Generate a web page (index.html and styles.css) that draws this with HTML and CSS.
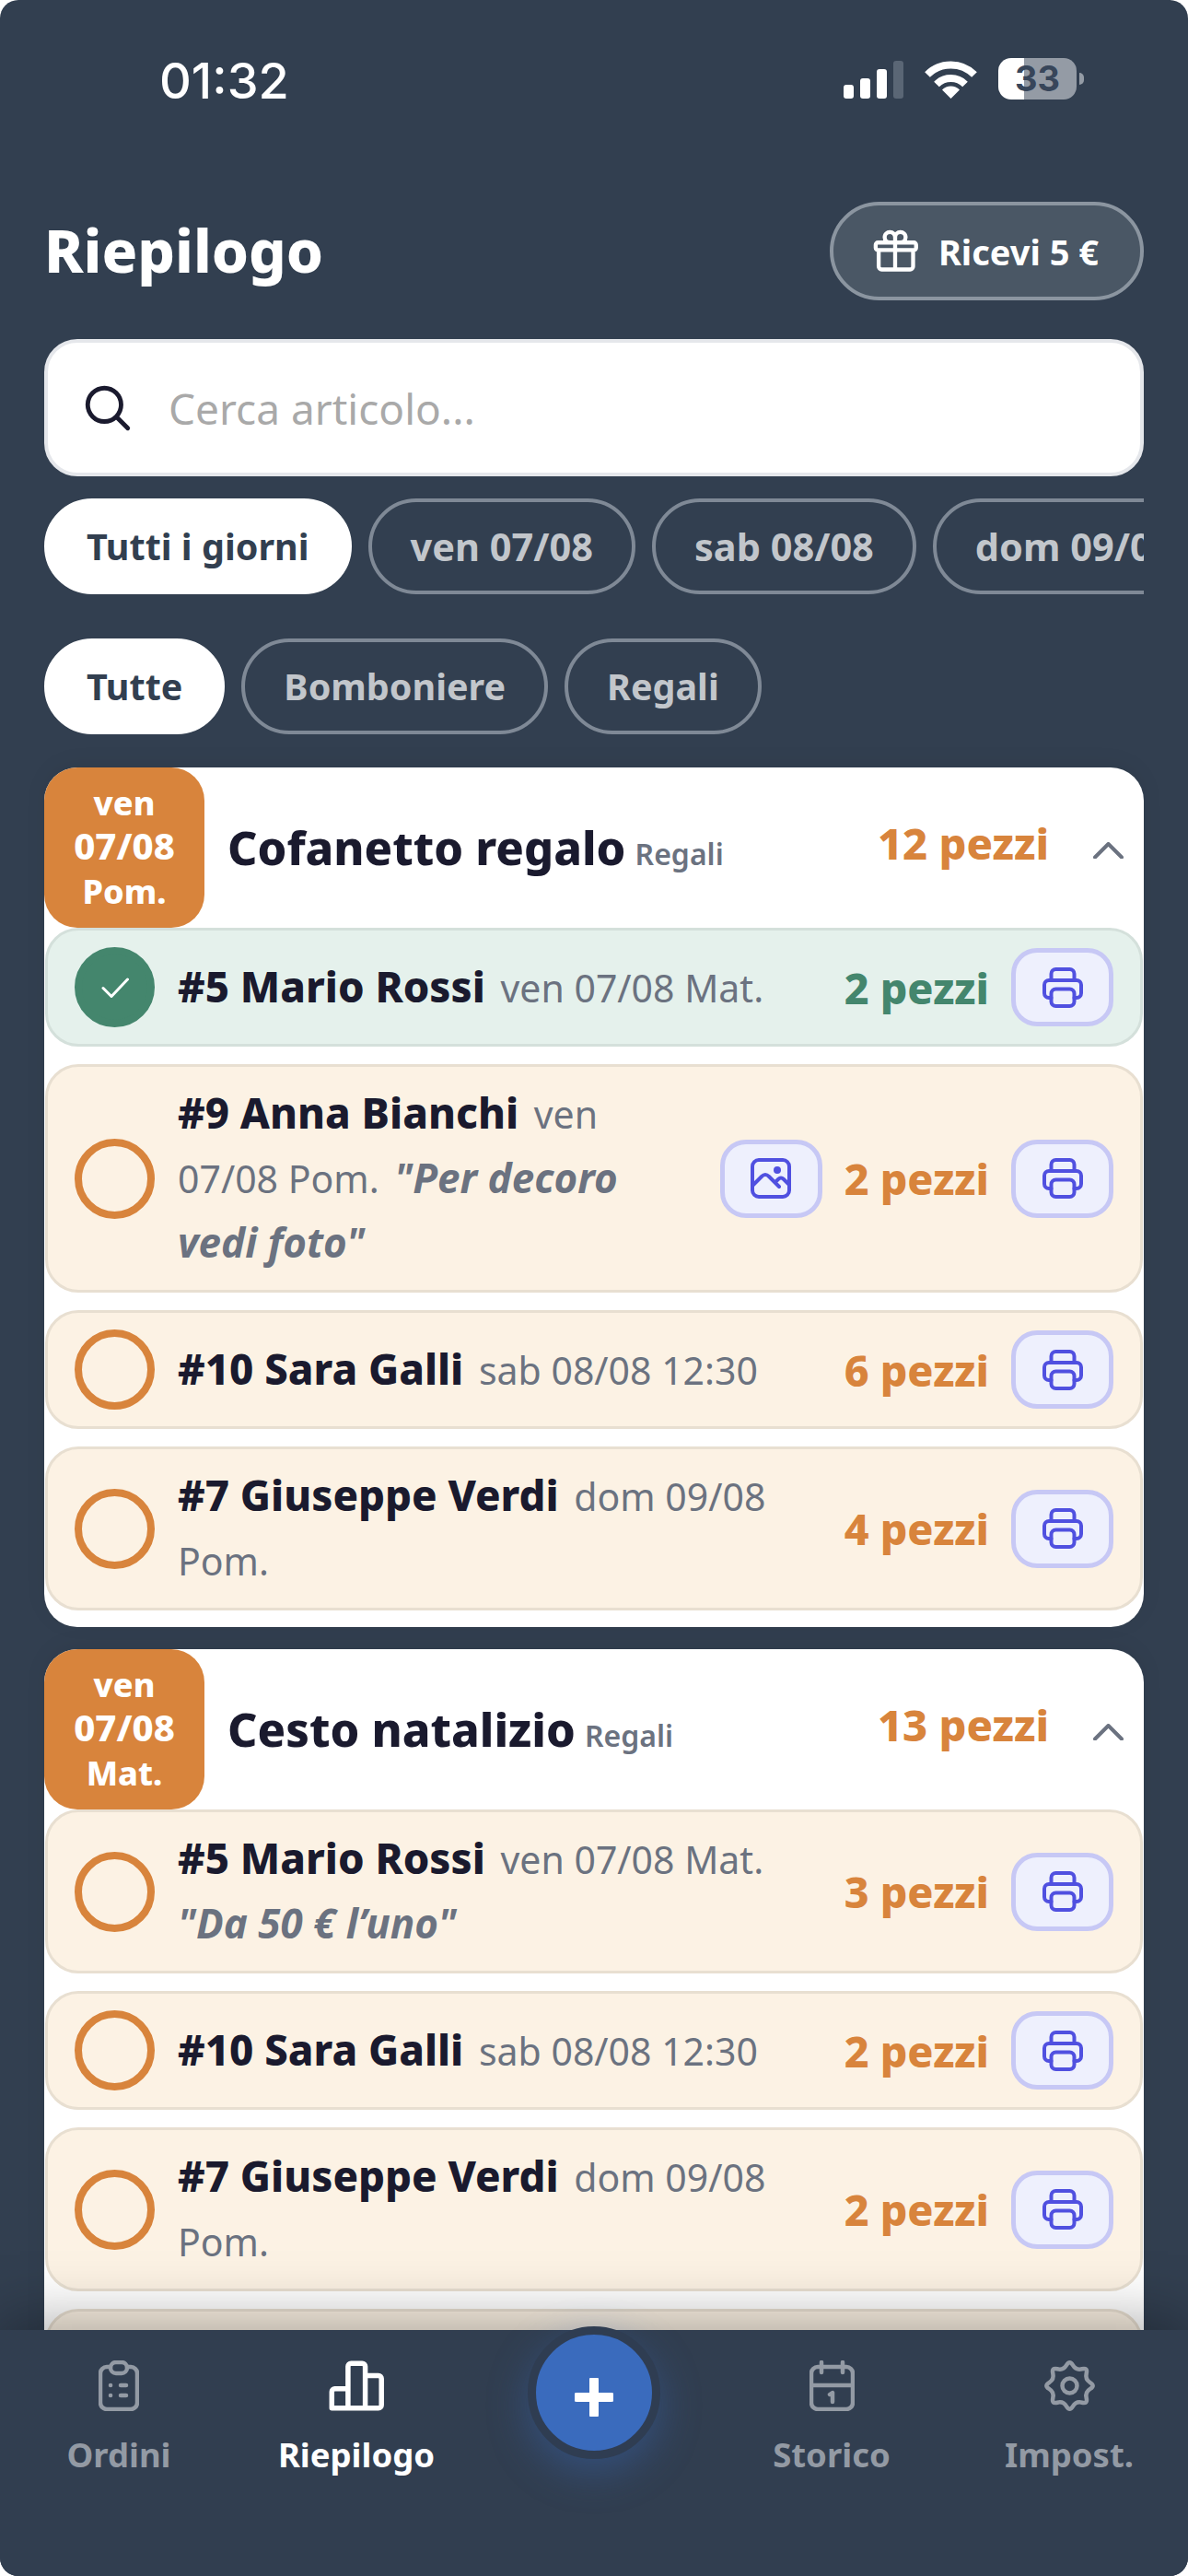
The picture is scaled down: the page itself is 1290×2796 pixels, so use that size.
FILE: index.html
```html
<!DOCTYPE html>
<html lang="it">
<head>
<meta charset="utf-8">
<title>Riepilogo</title>
<link rel="stylesheet" href="styles.css">
</head>
<body>
<svg class="defs" width="0" height="0" aria-hidden="true">
  <symbol id="printer" viewBox="0 0 44 44"><path d="M9.5 14V7a5 5 0 0 1 5-5h15a5 5 0 0 1 5 5v7M9.5 33H7a5 5 0 0 1-5-5v-9a5 5 0 0 1 5-5h30a5 5 0 0 1 5 5v9a5 5 0 0 1-5 5h-2.5"/><rect x="9.5" y="23.5" width="25" height="18.5" rx="5"/></symbol>
  <symbol id="photo" viewBox="0 0 44 44"><rect x="2" y="2" width="40" height="40" rx="7"/><path d="M2 30l10-10q4-4 8 0l11 11M27 26l3-3q3-3 6 0l6 6"/><circle class="dot" cx="29" cy="13" r="2"/></symbol>
</svg>
<div class="app">
  <div class="status">
    <span class="time">01:32</span>
    <div class="status-icons">
      <div class="signal"><i class="b1"></i><i class="b2"></i><i class="b3"></i><i class="b4"></i></div>
      <svg class="wifi" viewBox="0 0 57 42"><path d="M3 16A36 36 0 0 1 54 16M13 26.500A22 22 0 0 1 44 26.500" fill="none" stroke="#fff" stroke-width="8"/><path d="M28.500 42L19 32.500A13.400 13.400 0 0 1 38 32.500Z" fill="#fff"/></svg>
      <div class="battery"><span>33</span></div>
      <i class="nub"></i>
    </div>
  </div>

  <header class="top">
    <h1>Riepilogo</h1>
    <button class="reward">
      <svg viewBox="0 0 24 24"><path d="M21 11.250v8.250a1.500 1.500 0 0 1-1.500 1.500H5.250a1.500 1.500 0 0 1-1.500-1.500v-8.250M12 4.875A2.625 2.625 0 1 0 9.375 7.500H12m0-2.625V7.500m0-2.625A2.625 2.625 0 1 1 14.625 7.500H12m0 0V21m-8.625-9.750h18c.621 0 1.125-.504 1.125-1.125v-1.500c0-.621-.504-1.125-1.125-1.125h-18c-.621 0-1.125.504-1.125 1.125v1.500c0 .621.504 1.125 1.125 1.125Z"/></svg>
      Ricevi 5 €
    </button>
  </header>

  <div class="search">
    <svg viewBox="0 0 24 24"><path d="m21 21-5.197-5.197m0 0A7.500 7.500 0 1 0 5.196 5.196a7.500 7.500 0 0 0 10.607 10.607Z"/></svg>
    <span>Cerca articolo...</span>
  </div>

  <div class="chips days">
    <span class="chip on">Tutti i giorni</span>
    <span class="chip date">ven 07/08</span>
    <span class="chip date">sab 08/08</span>
    <span class="chip date">dom 09/08</span>
  </div>
  <div class="chips cats">
    <span class="chip on">Tutte</span>
    <span class="chip">Bomboniere</span>
    <span class="chip">Regali</span>
  </div>

  <main class="list">
    <section class="card">
      <div class="card-head">
        <div class="badge">ven<br><span class="badge-date">07/08</span><br>Pom.</div>
        <div class="card-title"><strong>Cofanetto regalo</strong> <small>Regali</small></div>
        <span class="card-qty">12 pezzi</span>
        <svg class="chev" viewBox="0 0 33 18"><path d="M2 16.500L16.500 2 31 16.500"/></svg>
      </div>
      <div class="rows">
        <div class="row done">
          <span class="tick"><svg viewBox="0 0 30 22"><path d="M2 11.500l9 9L28.500 2"/></svg></span>
          <div class="info"><b>#5 Mario Rossi</b> <span>ven 07/08 Mat.</span></div>
          <span class="qty">2 pezzi</span>
          <button class="act"><svg><use href="#printer"/></svg></button>
        </div>
        <div class="row">
          <span class="tick"></span>
          <div class="info"><b>#9 Anna Bianchi</b> <span>ven<br>07/08 Pom.</span> <em>"Per decoro<br>vedi foto"</em></div>
          <button class="act"><svg><use href="#photo"/></svg></button>
          <span class="qty">2 pezzi</span>
          <button class="act"><svg><use href="#printer"/></svg></button>
        </div>
        <div class="row">
          <span class="tick"></span>
          <div class="info"><b>#10 Sara Galli</b> <span>sab 08/08 12:30</span></div>
          <span class="qty">6 pezzi</span>
          <button class="act"><svg><use href="#printer"/></svg></button>
        </div>
        <div class="row">
          <span class="tick"></span>
          <div class="info"><b>#7 Giuseppe Verdi</b> <span>dom 09/08<br>Pom.</span></div>
          <span class="qty">4 pezzi</span>
          <button class="act"><svg><use href="#printer"/></svg></button>
        </div>
      </div>
    </section>

    <section class="card">
      <div class="card-head">
        <div class="badge">ven<br><span class="badge-date">07/08</span><br>Mat.</div>
        <div class="card-title"><strong>Cesto natalizio</strong> <small>Regali</small></div>
        <span class="card-qty">13 pezzi</span>
        <svg class="chev" viewBox="0 0 33 18"><path d="M2 16.500L16.500 2 31 16.500"/></svg>
      </div>
      <div class="rows">
        <div class="row">
          <span class="tick"></span>
          <div class="info"><b>#5 Mario Rossi</b> <span>ven 07/08 Mat.</span><br><em class="first">"Da 50 € l’uno"</em></div>
          <span class="qty">3 pezzi</span>
          <button class="act"><svg><use href="#printer"/></svg></button>
        </div>
        <div class="row">
          <span class="tick"></span>
          <div class="info"><b>#10 Sara Galli</b> <span>sab 08/08 12:30</span></div>
          <span class="qty">2 pezzi</span>
          <button class="act"><svg><use href="#printer"/></svg></button>
        </div>
        <div class="row">
          <span class="tick"></span>
          <div class="info"><b>#7 Giuseppe Verdi</b> <span>dom 09/08<br>Pom.</span></div>
          <span class="qty">2 pezzi</span>
          <button class="act"><svg><use href="#printer"/></svg></button>
        </div>
        <div class="row"></div>
      </div>
    </section>
  </main>

  <nav class="tabs">
    <div class="tab">
      <svg viewBox="0 0 44 55"><path d="M13 7H9a7 7 0 0 0-7 7v32a7 7 0 0 0 7 7h26a7 7 0 0 0 7-7V14a7 7 0 0 0-7-7h-4"/><rect x="13" y="2" width="18" height="12" rx="6"/><path d="M13 27h.1M24 27h6M13 38h.1M24 38h6"/></svg>
      <span>Ordini</span>
    </div>
    <div class="tab active">
      <svg viewBox="0 0 55 50"><path d="M3 47V31a3 3 0 0 1 3-3h13V6a3 3 0 0 1 3-3h11a3 3 0 0 1 3 3v9h13a3 3 0 0 1 3 3v26a3 3 0 0 1-3 3ZM19 28v19M36 15v32"/></svg>
      <span>Riepilogo</span>
    </div>
    <div class="tab fab-cell">
      <button class="fab"><svg viewBox="0 0 42 42"><path d="M21 2v38M2 21h38"/></svg></button>
    </div>
    <div class="tab">
      <svg viewBox="0 0 49 55"><rect x="2" y="7" width="45" height="46" rx="7"/><path d="M2 27h45M13 2v11M36 2v11M22 37l3-2v10"/></svg>
      <span>Storico</span>
    </div>
    <div class="tab">
      <svg viewBox="0 0 55 55"><path d="M30.950 5.200Q34.400 10.900 40.850 9.300Q47.300 7.700 45.700 14.150Q44.100 20.600 49.800 24.050Q55.500 27.500 49.800 30.950Q44.100 34.400 45.700 40.850Q47.300 47.300 40.850 45.700Q34.400 44.100 30.950 49.800Q27.500 55.500 24.050 49.800Q20.600 44.100 14.150 45.700Q7.700 47.300 9.300 40.850Q10.900 34.400 5.200 30.950Q-.5 27.500 5.200 24.050Q10.900 20.600 9.300 14.150Q7.700 7.700 14.150 9.300Q20.600 10.900 24.050 5.200Q27.500 -.5 30.950 5.200Z"/><circle cx="27.500" cy="27.500" r="8"/></svg>
      <span>Impost.</span>
    </div>
  </nav>
</div>
</body>
</html>
```
FILE: styles.css
```css
* { box-sizing: border-box; }
html, body { margin: 0; background: #fff; }
.defs { position: absolute; }
.app {
  width: 1290px;
  height: 2796px;
  background: #323f50;
  border-radius: 20px;
  overflow: hidden;
  display: flex;
  flex-direction: column;
  font-family: "Noto Sans", "Lato", sans-serif;
  color: #1a1a2e;
}

/* status bar */
.status {
  height: 219px;
  flex: none;
  display: flex;
  align-items: flex-start;
  justify-content: space-between;
  padding: 63px 113px 0 173px;
}
.time { font: 500 54px/50px "Inter", sans-serif; color: #fff; }
.status-icons { display: flex; align-items: flex-start; }
.signal { display: flex; align-items: flex-end; gap: 7px; height: 41px; margin: 3px 23px 0 0; }
.signal i { width: 11px; background: #fff; border-radius: 3px; display: block; }
.signal .b1 { height: 15px; }
.signal .b2 { height: 22px; }
.signal .b3 { height: 32px; }
.signal .b4 { height: 41px; background: #5a6675; }
.wifi { width: 57px; height: 42px; margin: 2px 23px 0 0; }
.battery {
  width: 85px;
  height: 45px;
  border-radius: 14px;
  background: linear-gradient(90deg, #fff 33%, #949ba5 33%);
  display: flex;
  align-items: center;
  justify-content: center;
  font: 700 38px/45px "Inter", sans-serif;
  color: #38465a;
}
.nub { width: 5px; height: 13px; margin: 16px 0 0 3px; background: #949ba5; border-radius: 0 6px 6px 0; display: block; }

/* header */
.top { flex: none; height: 107px; margin: 0 48px 0 48px; display: flex; align-items: center; justify-content: space-between; }
h1 { margin: 0 0 2px; font-size: 64px; font-weight: 800; line-height: 80px; color: #fff; }
.reward {
  width: 341px;
  height: 107px;
  border: 4px solid #8b95a0;
  border-radius: 54px;
  background: #4a5765;
  color: #fff;
  font: 700 38px "Noto Sans", sans-serif;
  display: flex;
  align-items: center;
  justify-content: center;
  gap: 21px;
  padding: 0 4px 0 0;
}
.reward svg { width: 52px; height: 52px; fill: none; stroke: #fff; stroke-width: 2; stroke-linecap: round; stroke-linejoin: round; }

/* search */
.search {
  flex: none;
  height: 149px;
  margin: 42px 48px 0;
  background: #fff;
  border: 4px solid #e5e7eb;
  border-radius: 36px;
  display: flex;
  align-items: center;
  padding: 0 0 0 36px;
  gap: 37px;
  font-size: 46px;
  color: #a9a9a9;
}
.search svg { width: 58px; height: 58px; flex: none; fill: none; stroke: #1a1a2e; stroke-width: 2; stroke-linecap: round; stroke-linejoin: round; }

/* chips */
.chips { flex: none; display: flex; gap: 18px; margin: 0 48px; overflow: hidden; }
.days { margin-top: 24px; }
.cats { margin-top: 48px; }
.chip {
  flex: none;
  height: 104px;
  padding: 0 42px;
  border: 4px solid #7f8996;
  border-radius: 52px;
  display: flex;
  align-items: center;
  font-size: 39.5px;
  font-weight: 700;
  color: #c2c6cb;
}
.chip.date { font-size: 41.5px; }
.chip.on { background: #fff; border-color: #fff; color: #323f50; }

/* list */
.list { flex: 1; min-height: 0; overflow: hidden; padding: 36px 48px 0; display: flex; flex-direction: column; gap: 24px; }
.card { flex: none; background: #fff; border-radius: 36px; padding-bottom: 18px; box-shadow: 0 -4px 24px rgba(0, 0, 0, .06); }
.card-head { height: 174px; display: flex; align-items: center; }
.badge {
  width: 174px;
  height: 174px;
  flex: none;
  background: #d8843c;
  border-radius: 36px;
  color: #fff;
  font-size: 36px;
  font-weight: 800;
  line-height: 48px;
  text-align: center;
  padding-top: 15px;
}
.badge-date { font-size: 40px; line-height: 1; }
.card-title { flex: 1; margin: -2px 0 0 25px; white-space: nowrap; }
.card-title strong { font-size: 50.5px; font-weight: 800; }
.card-title small { font-size: 32px; font-weight: 600; color: #6b7280; margin-left: 6px; }
.card-qty { font-size: 47px; font-weight: 800; color: #d8843c; margin: -10px 48px 0 0; }
.chev { width: 33px; height: 18px; margin: 6px 22px 0 0; fill: none; stroke: #6b7280; stroke-width: 4; stroke-linecap: round; stroke-linejoin: round; }

.rows { display: flex; flex-direction: column; gap: 19px; padding: 0 1px; }
.row {
  min-height: 129px;
  padding: 16px 29px;
  border: 3px solid #e8dfd1;
  border-radius: 36px;
  background: #fcf2e4;
  display: flex;
  align-items: center;
  gap: 24px;
}
.row.done { background: #e5f1ec; border-color: #d4e0db; }
.tick {
  width: 87px;
  height: 87px;
  flex: none;
  margin-right: 1px;
  border: 8px solid #d8843c;
  border-radius: 50%;
  display: flex;
  align-items: center;
  justify-content: center;
}
.done .tick { background: #44866d; border-color: #44866d; }
.tick svg { width: 30px; height: 22px; fill: none; stroke: #fff; stroke-width: 3; stroke-linecap: round; stroke-linejoin: round; }
.info { flex: 1; min-width: 0; font-size: 41px; line-height: 70px; color: #6b7280; white-space: nowrap; }
.info b, .info em, .info span { line-height: 1; }
.info b { font-size: 45.5px; font-weight: 800; color: #1a1a2e; margin-right: 6px; }
.info em { font-size: 44px; font-weight: 700; font-style: italic; margin-left: 6px; }
.info em.first { margin-left: 0; }
.qty { flex: none; font-size: 46.5px; font-weight: 800; color: #d8843c; }
.done .qty { color: #44866d; }
.act {
  width: 111px;
  height: 85px;
  flex: none;
  padding: 0;
  border: 5px solid #c7c8f5;
  border-radius: 28px;
  background: #eef0fd;
  display: flex;
  align-items: center;
  justify-content: center;
}
.act svg { width: 44px; height: 44px; fill: none; stroke: #5050e0; stroke-width: 4; stroke-linecap: round; stroke-linejoin: round; }
.act svg .dot { fill: #5050e0; stroke: none; }

/* tab bar */
.tabs {
  position: relative;
  flex: none;
  height: 267px;
  background: #313e50;
  display: grid;
  grid-template-columns: repeat(5, 1fr);
  box-shadow: 0 -8px 64px rgba(0, 0, 0, .34);
}
.tab { display: flex; flex-direction: column; align-items: center; padding-top: 33px; font-size: 36.5px; font-weight: 700; color: #939aa4; position: relative; }
.tab svg { height: 55px; width: auto; flex: none; fill: none; stroke: #939aa4; stroke-width: 4.500; stroke-linecap: round; stroke-linejoin: round; }
.tab span { margin-top: 22px; }
.tab.active { color: #fff; }
.tab.active svg { stroke: #fff; stroke-width: 5; }
.fab {
  position: absolute;
  top: -4px;
  left: 57px;
  width: 144px;
  height: 144px;
  padding: 0;
  border: 9px solid #2f3d52;
  border-radius: 50%;
  background: #3a6bbd;
  box-shadow: 0 14px 44px rgba(58, 107, 189, .4);
  display: flex;
  align-items: center;
  justify-content: center;
}
.fab svg { width: 42px; height: 42px; margin-top: 10px; fill: none; stroke: #fff; stroke-width: 10; stroke-linecap: round; }
```
